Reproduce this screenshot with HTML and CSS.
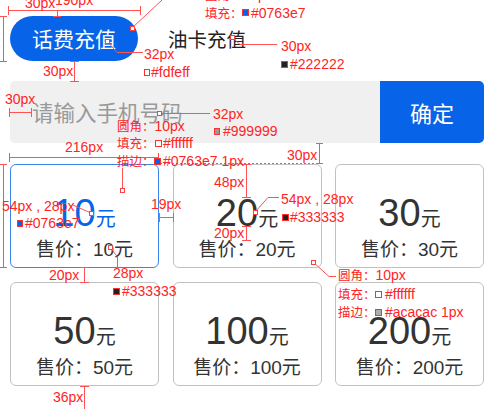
FILE: index.html
```html
<!DOCTYPE html>
<html lang="zh-CN">
<head>
<meta charset="utf-8">
<title>充值</title>
<link rel="stylesheet" href="styles.css">
</head>
<body>
<div class="page">
  <div class="tabs">
    <div class="tab tab-active">话费充值</div>
    <div class="tab tab-plain">油卡充值</div>
  </div>
  <div class="search">
    <div class="input">请输入手机号码</div>
    <div class="confirm">确定</div>
  </div>
  <div class="grid">
    <div class="card card-selected"><div class="amt"><span class="num">10</span><span class="unit">元</span></div><div class="price">售价：10元</div></div>
    <div class="card"><div class="amt"><span class="num">20</span><span class="unit">元</span></div><div class="price">售价：20元</div></div>
    <div class="card"><div class="amt"><span class="num">30</span><span class="unit">元</span></div><div class="price">售价：30元</div></div>
    <div class="card"><div class="amt"><span class="num">50</span><span class="unit">元</span></div><div class="price">售价：50元</div></div>
    <div class="card"><div class="amt"><span class="num">100</span><span class="unit">元</span></div><div class="price">售价：100元</div></div>
    <div class="card"><div class="amt"><span class="num">200</span><span class="unit">元</span></div><div class="price">售价：200元</div></div>
  </div>
</div>

<svg class="notes" width="498" height="409" viewBox="0 0 498 409" xmlns="http://www.w3.org/2000/svg">
  <g class="ln">
    <!-- top width -->
    <path d="M8 10.5H140.5M8.5 6V15M140.5 6V15"/>
    <path d="M57.5 10V16.5M53 16.5H61"/>
    <!-- left height of tab -->
    <path d="M3.5 16V61.5M0 16.5H7M0 61.5H7"/>
    <!-- diagonal from tab corner -->
    <path d="M132 28L162 0"/>
    <!-- tab text -->
    <path d="M107 41L117 52.5H143"/>
    <!-- gap tab to input -->
    <path d="M74.5 61V81.5M70 61.5H79M70 81.5H79"/>
    <!-- 油卡 text -->
    <path d="M232 37L240 44.5H277"/>
    <!-- input left padding -->
    <path d="M9 112.5H31.5M9.5 108V117M31.5 108V117"/>
    <!-- placeholder -->
    <path d="M159 113.5H210"/>
    <!-- card width -->
    <path d="M9 157.5H158.5M9.5 153V162M158.5 153V162"/>
    <!-- gap input to cards -->
    <path d="M319.5 143V164M316 143.5H323M316 163.5H323"/>
    <path class="dash" d="M160 163.5H318"/>
    <!-- card height -->
    <path d="M3.5 164V268M0 164.5H7M0 267.5H7"/>
    <!-- card stroke marker -->
    <path d="M122.5 168V189"/>
    <!-- card1 number -->
    <path d="M73 205L91 213"/>
    <!-- column gap -->
    <path d="M159 217.5H173.5M159.5 213V222M173.5 213V222"/>
    <!-- 48px -->
    <path d="M246.5 164V197.5M242 164.5H251M242 197.5H251"/>
    <!-- 20px -->
    <path d="M246.5 226V240.5M242 226.5H251M242 240.5H251"/>
    <!-- card2 number -->
    <path d="M255 212L268 197.5H279"/>
    <!-- price -->
    <path d="M110 247L117.5 257V268"/>
    <!-- row gap -->
    <path d="M84.5 267V282.5M80 267.5H89M80 282.5H89"/>
    <!-- card3 corner -->
    <path d="M313 262L329 276.5H336"/>
    <!-- bottom -->
    <path d="M84.5 386V409M80 386.5H89"/>
  </g>
  <g class="mk">
    <rect x="130.5" y="26.5" width="4" height="4"/>
    <rect x="105.5" y="39.5" width="4" height="4"/>
    <rect x="230.5" y="35.5" width="4" height="4"/>
    <rect x="157.5" y="111.5" width="4" height="4"/>
    <rect x="120.5" y="188.5" width="4" height="4"/>
    <rect x="89.5" y="211.5" width="4" height="4"/>
    <rect x="253.5" y="210.5" width="4" height="4"/>
    <rect x="108.5" y="245.5" width="4" height="4"/>
    <rect x="311.5" y="260.5" width="4" height="4"/>
  </g>

  <g class="note">
    <text x="25" y="8">30px</text>
    <text x="55" y="5">190px</text>

    <text x="205" y="0"><tspan class="cj">圆角：</tspan>10px</text>
    <text x="205" y="18"><tspan class="cj">填充：</tspan></text>
    <rect class="sw sw-blue" x="242.5" y="9.5" width="6" height="6"/>
    <text x="251" y="18">#0763e7</text>

    <text x="144" y="59">32px</text>
    <rect class="sw sw-white" x="144.5" y="69.5" width="5" height="6"/>
    <text x="151" y="77">#fdfeff</text>

    <text x="43" y="76">30px</text>

    <text x="281" y="51">30px</text>
    <rect class="sw sw-dark" x="281.5" y="61.5" width="6" height="6"/>
    <text x="290" y="69">#222222</text>

    <text x="5" y="104">30px</text>

    <text x="213" y="119">32px</text>
    <rect class="sw sw-gray" x="214.5" y="128.5" width="5" height="6"/>
    <text x="223" y="136">#999999</text>

    <text x="117" y="131"><tspan class="cj">圆角：</tspan>10px</text>
    <text x="117" y="148"><tspan class="cj">填充：</tspan></text>
    <rect class="sw sw-white" x="155.5" y="140.5" width="6" height="6"/>
    <text x="163" y="148">#ffffff</text>
    <text x="117" y="166"><tspan class="cj">描边：</tspan></text>
    <rect class="sw sw-blue" x="154.5" y="158.5" width="6" height="6"/>
    <text x="163" y="166">#0763e7 1px</text>

    <text x="65" y="152">216px</text>
    <text x="287" y="160">30px</text>

    <text x="2" y="211">54px , 28px</text>
    <rect class="sw sw-blue" x="17.5" y="220.5" width="5" height="6"/>
    <text x="25" y="228">#0763e7</text>

    <text x="151" y="209">19px</text>
    <text x="214" y="187">48px</text>
    <text x="214" y="238">20px</text>

    <text x="281" y="204">54px , 28px</text>
    <rect class="sw sw-dark" x="282.5" y="214.5" width="6" height="6"/>
    <text x="290" y="222">#333333</text>

    <text x="113" y="278">28px</text>
    <rect class="sw sw-dark" x="113.5" y="288.5" width="6" height="6"/>
    <text x="122" y="296">#333333</text>

    <text x="49" y="280">20px</text>

    <text x="338" y="280"><tspan class="cj">圆角：</tspan>10px</text>
    <text x="338" y="299"><tspan class="cj">填充：</tspan></text>
    <rect class="sw sw-white" x="375.5" y="291.5" width="6" height="6"/>
    <text x="385" y="299">#ffffff</text>
    <text x="338" y="317"><tspan class="cj">描边：</tspan></text>
    <rect class="sw sw-silver" x="375.5" y="309.5" width="6" height="6"/>
    <text x="385" y="317">#acacac 1px</text>

    <text x="53" y="402">36px</text>
  </g>
</svg>
</body>
</html>
```

FILE: styles.css
```css
html, body {
  margin: 0;
  padding: 0;
  background: #ffffff;
  overflow: hidden;
}

body {
  width: 498px;
  height: 409px;
  position: relative;
  font-family: "Noto Sans CJK SC", "Liberation Sans", sans-serif;
}

.page {
  padding: 16px 14px 0 10px;
}

.tabs {
  display: flex;
  align-items: center;
  height: 45px;
}

.tab {
  height: 45px;
  line-height: 45px;
  white-space: nowrap;
}

.tab-active {
  width: 128px;
  text-align: center;
  background: #0763e7;
  color: #fdfeff;
  border-radius: 23px;
  font-size: 21px;
}

.tab-plain {
  margin-left: 30px;
  color: #222222;
  font-size: 19.5px;
}

.search {
  display: flex;
  margin-top: 20px;
  height: 62px;
}

.input {
  flex: 1;
  background: #f0f0f0;
  border-radius: 5px 0 0 5px;
  padding-left: 22px;
  line-height: 62px;
  font-size: 21.5px;
  color: #999999;
}

.confirm {
  width: 104px;
  background: #0763e7;
  border-radius: 0 5px 5px 0;
  color: #ffffff;
  font-size: 22px;
  line-height: 62px;
  text-align: center;
}

.grid {
  margin-top: 21px;
  display: grid;
  grid-template-columns: repeat(3, 1fr);
  column-gap: 13.5px;
  row-gap: 14px;
}

.card {
  box-sizing: border-box;
  height: 104px;
  border: 1px solid #c2c2c2;
  border-radius: 6px;
  background: #ffffff;
  padding-top: 29px;
  text-align: center;
  color: #333333;
  font-family: "Liberation Sans", "Noto Sans CJK SC", sans-serif;
}

.card-selected {
  border-color: #3a84ee;
}

.amt {
  height: 38px;
  line-height: 38px;
  white-space: nowrap;
}

.num {
  font-size: 38px;
}

.unit {
  font-size: 20px;
  font-family: "Noto Sans CJK SC", sans-serif;
}

.card-selected .amt {
  color: #0763e7;
}

.price {
  margin-top: 8px;
  font-size: 19px;
  line-height: 19px;
  white-space: nowrap;
}

/* annotation overlay */
.notes {
  position: absolute;
  left: 0;
  top: 0;
  pointer-events: none;
}

.ln path {
  stroke: #ff5252;
  stroke-width: 1;
  fill: none;
}

.ln .dash {
  stroke-dasharray: 2 2;
}

.mk rect {
  fill: #ffffff;
  stroke: #ff4040;
  stroke-width: 1;
}

.note text {
  fill: #ff2424;
  font-family: "Liberation Sans", "Noto Sans CJK SC", sans-serif;
  font-size: 14px;
}

.note .cj {
  font-family: "Noto Sans CJK SC", sans-serif;
  font-size: 12.5px;
}

.sw {
  stroke: #ff3030;
  stroke-width: 1;
}

.sw-blue { fill: #0763e7; }
.sw-white { fill: #ffffff; }
.sw-dark { fill: #222222; }
.sw-gray { fill: #999999; }
.sw-silver { fill: #acacac; }
```
